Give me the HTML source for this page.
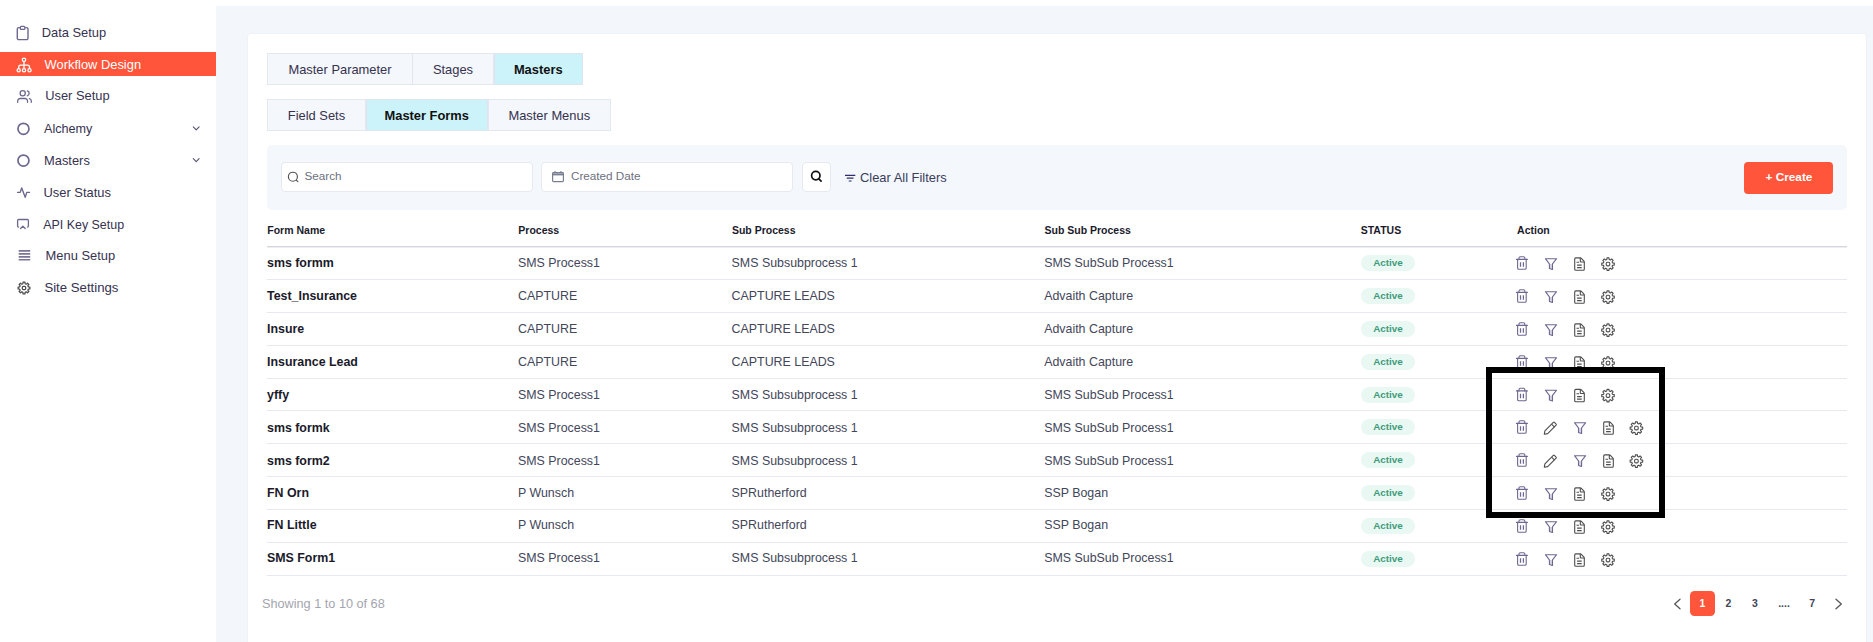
<!DOCTYPE html>
<html><head><meta charset="utf-8"><style>
html,body{margin:0;padding:0;width:1873px;height:642px;overflow:hidden;background:#fff;font-family:"Liberation Sans", sans-serif;}
.t{position:absolute;white-space:nowrap;line-height:20px;}
.ic{position:absolute;overflow:visible}
#side{position:absolute;left:0;top:0;width:216px;height:642px;background:#fff}
#main{position:absolute;left:216px;top:6px;width:1657px;height:636px;background:#f3f6fa}
#card{position:absolute;left:248px;top:34px;width:1618px;height:640px;background:#fff;border-radius:3px;box-shadow:0 0 0 1px #eef1f7}

.tab{position:absolute;height:32px;box-sizing:border-box;border:1px solid #e3e8f0}
.inp{position:absolute;top:162px;height:30px;box-sizing:border-box;background:#fff;border:1px solid #e6e9f0;border-radius:4px}
.badge{position:absolute;left:1361px;width:54px;height:16px;line-height:16px;border-radius:8px;background:#e9f8f3;color:#3f9b7b;font-size:9.9px;font-weight:700;text-align:center}

</style></head><body>
<div id="main"></div>
<div id="card"></div>
<div id="side"><div style="position:absolute;left:0;top:52px;width:216px;height:24px;background:#ff553b"></div><svg class="ic" style="left:0;top:0" width="40" height="320"><g fill="none" stroke="#6e6890" stroke-width="1.4" stroke-linejoin="round"><path d="M19.9 27.6h-1.2a1.4 1.4 0 0 0-1.4 1.4v9.2a1.4 1.4 0 0 0 1.4 1.4h7.9a1.4 1.4 0 0 0 1.4-1.4v-9.2a1.4 1.4 0 0 0-1.4-1.4h-1.2"/><rect x="20.3" y="26.4" width="4.6" height="3" rx="1"/></g></svg><div class="t" style="left:41.7px;top:22.50px;font-size:12.9px;font-weight:400;color:#36324f;">Data Setup</div><svg class="ic" style="left:0;top:0" width="40" height="320"><g fill="none" stroke="#fff" stroke-width="1.3"><circle cx="24" cy="59.8" r="1.7"/><circle cx="18.7" cy="70.3" r="1.6"/><circle cx="24" cy="70.3" r="1.6"/><circle cx="29.5" cy="70.3" r="1.6"/><path d="M24 61.5v7.1M18.7 68.7v-1.6a2 2 0 0 1 2-2h6.8a2 2 0 0 1 2 2v1.6"/></g></svg><div class="t" style="left:44.6px;top:54.60px;font-size:12.9px;font-weight:400;color:#ffffff;">Workflow Design</div><svg class="ic" style="left:0;top:0" width="40" height="320"><g fill="none" stroke="#6e6890" stroke-width="1.3" stroke-linecap="round"><circle cx="22.7" cy="93.3" r="2.6"/><path d="M27.3 90.8a2.6 2.6 0 0 1 0 5M17.7 102.3v-1.4a2.4 2.4 0 0 1 2.4-2.4h5a2.4 2.4 0 0 1 2.4 2.4v1.4M29.4 98.6a2.4 2.4 0 0 1 1.9 2.3v1.4"/></g></svg><div class="t" style="left:45.2px;top:86.40px;font-size:12.9px;font-weight:400;color:#36324f;">User Setup</div><svg class="ic" style="left:0;top:0" width="40" height="320"><circle cx="23.45" cy="128.85" r="5.5" fill="none" stroke="#6e6890" stroke-width="1.7"/></svg><div class="t" style="left:44.0px;top:118.85px;font-size:12.6px;font-weight:400;color:#36324f;">Alchemy</div><svg class="ic" style="left:0;top:0" width="40" height="320"><circle cx="23.45" cy="160.6" r="5.5" fill="none" stroke="#6e6890" stroke-width="1.7"/></svg><div class="t" style="left:44.0px;top:150.60px;font-size:12.9px;font-weight:400;color:#36324f;">Masters</div><svg class="ic" style="left:0;top:0" width="40" height="320"><path d="M17.6 192.4h2.6l1.5-4.5 3.5 9.3 1.6-4.8h2.7" fill="none" stroke="#6e6890" stroke-width="1.4" stroke-linejoin="round" stroke-linecap="round"/></svg><div class="t" style="left:43.5px;top:182.90px;font-size:12.9px;font-weight:400;color:#36324f;">User Status</div><svg class="ic" style="left:0;top:0" width="40" height="320"><g fill="none" stroke="#6e6890" stroke-width="1.3" stroke-linecap="round" stroke-linejoin="round"><path d="M18.6 227.1a1 1 0 0 1-1-1v-5.6a1 1 0 0 1 1-1h8.8a1 1 0 0 1 1 1v5.6a1 1 0 0 1-1 1"/><path d="M20.6 228.5l2.3-2.4 2.3 2.4"/></g></svg><div class="t" style="left:43.2px;top:214.50px;font-size:12.45px;font-weight:400;color:#36324f;">API Key Setup</div><svg class="ic" style="left:0;top:0" width="40" height="320"><g stroke="#7a7596" stroke-width="1.6"><path d="M18.7 250.9h11.5M18.7 253.9h11.5M18.7 256.9h11.5M18.7 259.8h11.5"/></g></svg><div class="t" style="left:45.6px;top:245.70px;font-size:12.9px;font-weight:400;color:#36324f;">Menu Setup</div><svg class="ic" style="left:0;top:0" width="40" height="320"><g fill="none" stroke="#4d4d4d" stroke-width="1.25" stroke-linejoin="round"><path d="M22.86 283.73 L23.05 282.10 L24.95 282.10 L25.14 283.73 L26.22 284.17 L27.50 283.16 L28.84 284.50 L27.83 285.78 L28.27 286.86 L29.90 287.05 L29.90 288.95 L28.27 289.14 L27.83 290.22 L28.84 291.50 L27.50 292.84 L26.22 291.83 L25.14 292.27 L24.95 293.90 L23.05 293.90 L22.86 292.27 L21.78 291.83 L20.50 292.84 L19.16 291.50 L20.17 290.22 L19.73 289.14 L18.10 288.95 L18.10 287.05 L19.73 286.86 L20.17 285.78 L19.16 284.50 L20.50 283.16 L21.78 284.17Z"/><rect x="22.30" y="286.30" width="3.40" height="3.40" rx="1.19"/></g></svg><div class="t" style="left:44.4px;top:277.60px;font-size:13.2px;font-weight:400;color:#36324f;">Site Settings</div><svg class="ic" style="left:0;top:0" width="216" height="320"><path d="M193.3 126.9l2.9 2.9 2.9-2.9" fill="none" stroke="#55516f" stroke-width="1.1" stroke-linecap="round" stroke-linejoin="round"/></svg><svg class="ic" style="left:0;top:0" width="216" height="320"><path d="M193.3 158.70000000000002l2.9 2.9 2.9-2.9" fill="none" stroke="#55516f" stroke-width="1.1" stroke-linecap="round" stroke-linejoin="round"/></svg></div>
<div class="tab" style="left:267px;top:53px;width:146px;background:#f4f7fb;border-color:#e3e7ef"></div><div class="t" style="left:267px;width:146px;text-align:center;top:59.8px;font-size:12.9px;font-weight:400;color:#36324f">Master Parameter</div><div class="tab" style="left:412px;top:53px;width:82px;background:#f4f7fb;border-color:#e3e7ef"></div><div class="t" style="left:412px;width:82px;text-align:center;top:59.8px;font-size:12.9px;font-weight:400;color:#36324f">Stages</div><div class="tab" style="left:493.5px;top:53px;width:89.5px;background:#cdf3fa;border-color:#e0e4ee"></div><div class="t" style="left:493.5px;width:89.5px;text-align:center;top:59.8px;font-size:12.9px;font-weight:700;color:#111">Masters</div><div class="tab" style="left:267px;top:99px;width:99px;background:#f4f7fb;border-color:#e3e7ef"></div><div class="t" style="left:267px;width:99px;text-align:center;top:105.5px;font-size:12.9px;font-weight:400;color:#36324f">Field Sets</div><div class="tab" style="left:365.5px;top:99px;width:122.5px;background:#cdf3fa;border-color:#e0e4ee"></div><div class="t" style="left:365.5px;width:122.5px;text-align:center;top:105.5px;font-size:12.9px;font-weight:700;color:#111">Master Forms</div><div class="tab" style="left:487.5px;top:99px;width:123.5px;background:#f4f7fb;border-color:#e3e7ef"></div><div class="t" style="left:487.5px;width:123.5px;text-align:center;top:105.5px;font-size:12.9px;font-weight:400;color:#36324f">Master Menus</div><div style="position:absolute;left:267px;top:145px;width:1580px;height:65px;background:#f4f7fb;border-radius:5px"></div><div class="inp" style="left:281px;width:252px"></div><div class="inp" style="left:541px;width:252px"></div><div class="inp" style="left:802px;width:29px"></div><svg class="ic" style="left:0;top:0" width="1000" height="220"><g fill="none" stroke="#505050" stroke-width="1.15" stroke-linecap="round"><circle cx="292.9" cy="176.7" r="4.5"/><path d="M296.3 180.1l1.6 1.6"/></g></svg><div class="t" style="left:304.5px;top:166.20px;font-size:11.7px;font-weight:400;color:#6c7080;">Search</div><svg class="ic" style="left:0;top:0" width="1000" height="220"><g fill="none" stroke="#7a8094" stroke-width="1.2"><rect x="552.6" y="172.6" width="10.8" height="9" rx="0.8"/><path d="M552.6 174.4h10.8" stroke-width="2"/><path d="M555 171v1.6M561 171v1.6"/></g></svg><div class="t" style="left:571.0px;top:166.20px;font-size:11.7px;font-weight:400;color:#6c7080;">Created Date</div><svg class="ic" style="left:0;top:0" width="1000" height="220"><g fill="none" stroke="#111" stroke-width="1.7" stroke-linecap="round"><circle cx="815.8" cy="175.6" r="4.2"/><path d="M818.8 178.8l2.3 2.3"/></g></svg><svg class="ic" style="left:0;top:0" width="1000" height="220"><g stroke="#2c2f6a" stroke-width="1.2"><path d="M845 175.4h10.3M846.8 178.2h6.7M848.7 181h2.9"/></g></svg><div class="t" style="left:860px;top:168.00px;font-size:12.9px;font-weight:400;color:#3a3d5c;">Clear All Filters</div><div style="position:absolute;left:1744px;top:162px;width:89px;height:32px;background:#ff553b;border-radius:4px"></div><div class="t" style="left:1765.5px;top:167.20px;font-size:11.8px;font-weight:700;color:#fff;">+ Create</div><div class="t" style="left:267.3px;top:220.30px;font-size:10.5px;font-weight:700;color:#1a1a2a;">Form Name</div><div class="t" style="left:518.3px;top:220.30px;font-size:10.5px;font-weight:700;color:#1a1a2a;">Process</div><div class="t" style="left:731.9px;top:220.30px;font-size:10.5px;font-weight:700;color:#1a1a2a;">Sub Process</div><div class="t" style="left:1044.5px;top:220.30px;font-size:10.5px;font-weight:700;color:#1a1a2a;">Sub Sub Process</div><div class="t" style="left:1360.7px;top:220.30px;font-size:10.5px;font-weight:700;color:#1a1a2a;">STATUS</div><div class="t" style="left:1517.1px;top:220.30px;font-size:10.5px;font-weight:700;color:#1a1a2a;">Action</div><div style="position:absolute;left:267px;top:246px;width:1580px;height:1px;background:#d4d6dc"></div><div style="position:absolute;left:267px;top:247px;width:1580px;height:1px;background:#eceef2"></div><div class="t" style="left:267px;top:253px;font-size:12.4px;font-weight:700;color:#1a1a2a">sms formm</div><div class="t" style="left:518px;top:253px;font-size:12.4px;font-weight:400;color:#43465a">SMS Process1</div><div class="t" style="left:731.6px;top:253px;font-size:12.4px;font-weight:400;color:#43465a">SMS Subsubprocess 1</div><div class="t" style="left:1044.2px;top:253px;font-size:12.4px;font-weight:400;color:#43465a">SMS SubSub Process1</div><div class="badge" style="top:255.10px">Active</div><div style="position:absolute;left:267px;top:279px;width:1580px;height:1px;background:#e6e9f0"></div><div class="t" style="left:267px;top:286px;font-size:12.4px;font-weight:700;color:#1a1a2a">Test_Insurance</div><div class="t" style="left:518px;top:286px;font-size:12.4px;font-weight:400;color:#43465a">CAPTURE</div><div class="t" style="left:731.6px;top:286px;font-size:12.4px;font-weight:400;color:#43465a">CAPTURE LEADS</div><div class="t" style="left:1044.2px;top:286px;font-size:12.4px;font-weight:400;color:#43465a">Advaith Capture</div><div class="badge" style="top:288.10px">Active</div><div style="position:absolute;left:267px;top:312px;width:1580px;height:1px;background:#e6e9f0"></div><div class="t" style="left:267px;top:319px;font-size:12.4px;font-weight:700;color:#1a1a2a">Insure</div><div class="t" style="left:518px;top:319px;font-size:12.4px;font-weight:400;color:#43465a">CAPTURE</div><div class="t" style="left:731.6px;top:319px;font-size:12.4px;font-weight:400;color:#43465a">CAPTURE LEADS</div><div class="t" style="left:1044.2px;top:319px;font-size:12.4px;font-weight:400;color:#43465a">Advaith Capture</div><div class="badge" style="top:321.10px">Active</div><div style="position:absolute;left:267px;top:345px;width:1580px;height:1px;background:#e6e9f0"></div><div class="t" style="left:267px;top:352px;font-size:12.4px;font-weight:700;color:#1a1a2a">Insurance Lead</div><div class="t" style="left:518px;top:352px;font-size:12.4px;font-weight:400;color:#43465a">CAPTURE</div><div class="t" style="left:731.6px;top:352px;font-size:12.4px;font-weight:400;color:#43465a">CAPTURE LEADS</div><div class="t" style="left:1044.2px;top:352px;font-size:12.4px;font-weight:400;color:#43465a">Advaith Capture</div><div class="badge" style="top:354.10px">Active</div><div style="position:absolute;left:267px;top:378px;width:1580px;height:1px;background:#e6e9f0"></div><div class="t" style="left:267px;top:385px;font-size:12.4px;font-weight:700;color:#1a1a2a">yffy</div><div class="t" style="left:518px;top:385px;font-size:12.4px;font-weight:400;color:#43465a">SMS Process1</div><div class="t" style="left:731.6px;top:385px;font-size:12.4px;font-weight:400;color:#43465a">SMS Subsubprocess 1</div><div class="t" style="left:1044.2px;top:385px;font-size:12.4px;font-weight:400;color:#43465a">SMS SubSub Process1</div><div class="badge" style="top:386.60px">Active</div><div style="position:absolute;left:267px;top:410px;width:1580px;height:1px;background:#e6e9f0"></div><div class="t" style="left:267px;top:418px;font-size:12.4px;font-weight:700;color:#1a1a2a">sms formk</div><div class="t" style="left:518px;top:418px;font-size:12.4px;font-weight:400;color:#43465a">SMS Process1</div><div class="t" style="left:731.6px;top:418px;font-size:12.4px;font-weight:400;color:#43465a">SMS Subsubprocess 1</div><div class="t" style="left:1044.2px;top:418px;font-size:12.4px;font-weight:400;color:#43465a">SMS SubSub Process1</div><div class="badge" style="top:419.10px">Active</div><div style="position:absolute;left:267px;top:443px;width:1580px;height:1px;background:#e6e9f0"></div><div class="t" style="left:267px;top:451px;font-size:12.4px;font-weight:700;color:#1a1a2a">sms form2</div><div class="t" style="left:518px;top:451px;font-size:12.4px;font-weight:400;color:#43465a">SMS Process1</div><div class="t" style="left:731.6px;top:451px;font-size:12.4px;font-weight:400;color:#43465a">SMS Subsubprocess 1</div><div class="t" style="left:1044.2px;top:451px;font-size:12.4px;font-weight:400;color:#43465a">SMS SubSub Process1</div><div class="badge" style="top:452.10px">Active</div><div style="position:absolute;left:267px;top:476px;width:1580px;height:1px;background:#e6e9f0"></div><div class="t" style="left:267px;top:483px;font-size:12.4px;font-weight:700;color:#1a1a2a">FN Orn</div><div class="t" style="left:518px;top:483px;font-size:12.4px;font-weight:400;color:#43465a">P Wunsch</div><div class="t" style="left:731.6px;top:483px;font-size:12.4px;font-weight:400;color:#43465a">SPRutherford</div><div class="t" style="left:1044.2px;top:483px;font-size:12.4px;font-weight:400;color:#43465a">SSP Bogan</div><div class="badge" style="top:485.10px">Active</div><div style="position:absolute;left:267px;top:509px;width:1580px;height:1px;background:#e6e9f0"></div><div class="t" style="left:267px;top:515px;font-size:12.4px;font-weight:700;color:#1a1a2a">FN Little</div><div class="t" style="left:518px;top:515px;font-size:12.4px;font-weight:400;color:#43465a">P Wunsch</div><div class="t" style="left:731.6px;top:515px;font-size:12.4px;font-weight:400;color:#43465a">SPRutherford</div><div class="t" style="left:1044.2px;top:515px;font-size:12.4px;font-weight:400;color:#43465a">SSP Bogan</div><div class="badge" style="top:518.10px">Active</div><div style="position:absolute;left:267px;top:542px;width:1580px;height:1px;background:#e6e9f0"></div><div class="t" style="left:267px;top:548px;font-size:12.4px;font-weight:700;color:#1a1a2a">SMS Form1</div><div class="t" style="left:518px;top:548px;font-size:12.4px;font-weight:400;color:#43465a">SMS Process1</div><div class="t" style="left:731.6px;top:548px;font-size:12.4px;font-weight:400;color:#43465a">SMS Subsubprocess 1</div><div class="t" style="left:1044.2px;top:548px;font-size:12.4px;font-weight:400;color:#43465a">SMS SubSub Process1</div><div class="badge" style="top:551.10px">Active</div><div style="position:absolute;left:267px;top:575px;width:1580px;height:1px;background:#e6e9f0"></div><svg class="ic" style="left:0;top:0" width="1873" height="642"><g fill="none" stroke="#6e6890" stroke-width="1.1" stroke-linecap="round" stroke-linejoin="round"><path d="M1516.4 259.40000000000003h11"/><path d="M1519.0 259.40000000000003v-1.3a1.3 1.3 0 0 1 1.3-1.3h3.2a1.3 1.3 0 0 1 1.3 1.3v1.3"/><path d="M1517.6000000000001 259.40000000000003v8.6a1.3 1.3 0 0 0 1.3 1.3h6a1.3 1.3 0 0 0 1.3-1.3v-8.6"/><path d="M1520.5 262.2v4.6M1523.4 262.2v4.6" stroke-width="1.25" stroke-linecap="butt"/></g><g stroke="#6e6890" stroke-width="1.1" stroke-linejoin="round"><path d="M1549.5 263.90000000000003h3.1v5.6l-3.1-1z" fill="#d5d2e0" stroke="none"/><path fill="none" d="M1545.4 258.7h11.2l-4.1 5.1v5.6l-3.1-1v-4.6z"/></g><g fill="none" stroke="#4d4d4d" stroke-width="1.1" stroke-linejoin="round"><path d="M1580.3 257.90000000000003h-4.6a1 1 0 0 0-1 1v10.4a1 1 0 0 0 1 1h7.6a1 1 0 0 0 1-1v-7.4a1 1 0 0 0-0.3-0.7l-2.9-3a1 1 0 0 0-0.8-0.3z"/><path d="M1580.3 258.1v3.1a0.8 0.8 0 0 0 0.8 0.8h3"/><path d="M1576.5 262.3h2.6M1577.1000000000001 265.1h4.6M1577.1000000000001 267.6h4.6"/></g><g fill="none" stroke="#4d4d4d" stroke-width="1.1" stroke-linejoin="round"><path d="M1606.79 259.56 L1606.99 257.83 L1609.01 257.83 L1609.21 259.56 L1610.36 260.03 L1611.72 258.95 L1613.15 260.38 L1612.07 261.74 L1612.54 262.89 L1614.27 263.09 L1614.27 265.11 L1612.54 265.31 L1612.07 266.46 L1613.15 267.82 L1611.72 269.25 L1610.36 268.17 L1609.21 268.64 L1609.01 270.37 L1606.99 270.37 L1606.79 268.64 L1605.64 268.17 L1604.28 269.25 L1602.85 267.82 L1603.93 266.46 L1603.46 265.31 L1601.73 265.11 L1601.73 263.09 L1603.46 262.89 L1603.93 261.74 L1602.85 260.38 L1604.28 258.95 L1605.64 260.03Z"/><rect x="1606.20" y="262.30" width="3.60" height="3.60" rx="1.26"/></g><g fill="none" stroke="#6e6890" stroke-width="1.1" stroke-linecap="round" stroke-linejoin="round"><path d="M1516.4 292.40000000000003h11"/><path d="M1519.0 292.40000000000003v-1.3a1.3 1.3 0 0 1 1.3-1.3h3.2a1.3 1.3 0 0 1 1.3 1.3v1.3"/><path d="M1517.6000000000001 292.40000000000003v8.6a1.3 1.3 0 0 0 1.3 1.3h6a1.3 1.3 0 0 0 1.3-1.3v-8.6"/><path d="M1520.5 295.2v4.6M1523.4 295.2v4.6" stroke-width="1.25" stroke-linecap="butt"/></g><g stroke="#6e6890" stroke-width="1.1" stroke-linejoin="round"><path d="M1549.5 296.90000000000003h3.1v5.6l-3.1-1z" fill="#d5d2e0" stroke="none"/><path fill="none" d="M1545.4 291.7h11.2l-4.1 5.1v5.6l-3.1-1v-4.6z"/></g><g fill="none" stroke="#4d4d4d" stroke-width="1.1" stroke-linejoin="round"><path d="M1580.3 290.90000000000003h-4.6a1 1 0 0 0-1 1v10.4a1 1 0 0 0 1 1h7.6a1 1 0 0 0 1-1v-7.4a1 1 0 0 0-0.3-0.7l-2.9-3a1 1 0 0 0-0.8-0.3z"/><path d="M1580.3 291.1v3.1a0.8 0.8 0 0 0 0.8 0.8h3"/><path d="M1576.5 295.3h2.6M1577.1000000000001 298.1h4.6M1577.1000000000001 300.6h4.6"/></g><g fill="none" stroke="#4d4d4d" stroke-width="1.1" stroke-linejoin="round"><path d="M1606.79 292.56 L1606.99 290.83 L1609.01 290.83 L1609.21 292.56 L1610.36 293.03 L1611.72 291.95 L1613.15 293.38 L1612.07 294.74 L1612.54 295.89 L1614.27 296.09 L1614.27 298.11 L1612.54 298.31 L1612.07 299.46 L1613.15 300.82 L1611.72 302.25 L1610.36 301.17 L1609.21 301.64 L1609.01 303.37 L1606.99 303.37 L1606.79 301.64 L1605.64 301.17 L1604.28 302.25 L1602.85 300.82 L1603.93 299.46 L1603.46 298.31 L1601.73 298.11 L1601.73 296.09 L1603.46 295.89 L1603.93 294.74 L1602.85 293.38 L1604.28 291.95 L1605.64 293.03Z"/><rect x="1606.20" y="295.30" width="3.60" height="3.60" rx="1.26"/></g><g fill="none" stroke="#6e6890" stroke-width="1.1" stroke-linecap="round" stroke-linejoin="round"><path d="M1516.4 325.40000000000003h11"/><path d="M1519.0 325.40000000000003v-1.3a1.3 1.3 0 0 1 1.3-1.3h3.2a1.3 1.3 0 0 1 1.3 1.3v1.3"/><path d="M1517.6000000000001 325.40000000000003v8.6a1.3 1.3 0 0 0 1.3 1.3h6a1.3 1.3 0 0 0 1.3-1.3v-8.6"/><path d="M1520.5 328.2v4.6M1523.4 328.2v4.6" stroke-width="1.25" stroke-linecap="butt"/></g><g stroke="#6e6890" stroke-width="1.1" stroke-linejoin="round"><path d="M1549.5 329.90000000000003h3.1v5.6l-3.1-1z" fill="#d5d2e0" stroke="none"/><path fill="none" d="M1545.4 324.7h11.2l-4.1 5.1v5.6l-3.1-1v-4.6z"/></g><g fill="none" stroke="#4d4d4d" stroke-width="1.1" stroke-linejoin="round"><path d="M1580.3 323.90000000000003h-4.6a1 1 0 0 0-1 1v10.4a1 1 0 0 0 1 1h7.6a1 1 0 0 0 1-1v-7.4a1 1 0 0 0-0.3-0.7l-2.9-3a1 1 0 0 0-0.8-0.3z"/><path d="M1580.3 324.1v3.1a0.8 0.8 0 0 0 0.8 0.8h3"/><path d="M1576.5 328.3h2.6M1577.1000000000001 331.1h4.6M1577.1000000000001 333.6h4.6"/></g><g fill="none" stroke="#4d4d4d" stroke-width="1.1" stroke-linejoin="round"><path d="M1606.79 325.56 L1606.99 323.83 L1609.01 323.83 L1609.21 325.56 L1610.36 326.03 L1611.72 324.95 L1613.15 326.38 L1612.07 327.74 L1612.54 328.89 L1614.27 329.09 L1614.27 331.11 L1612.54 331.31 L1612.07 332.46 L1613.15 333.82 L1611.72 335.25 L1610.36 334.17 L1609.21 334.64 L1609.01 336.37 L1606.99 336.37 L1606.79 334.64 L1605.64 334.17 L1604.28 335.25 L1602.85 333.82 L1603.93 332.46 L1603.46 331.31 L1601.73 331.11 L1601.73 329.09 L1603.46 328.89 L1603.93 327.74 L1602.85 326.38 L1604.28 324.95 L1605.64 326.03Z"/><rect x="1606.20" y="328.30" width="3.60" height="3.60" rx="1.26"/></g><g fill="none" stroke="#6e6890" stroke-width="1.1" stroke-linecap="round" stroke-linejoin="round"><path d="M1516.4 358.40000000000003h11"/><path d="M1519.0 358.40000000000003v-1.3a1.3 1.3 0 0 1 1.3-1.3h3.2a1.3 1.3 0 0 1 1.3 1.3v1.3"/><path d="M1517.6000000000001 358.40000000000003v8.6a1.3 1.3 0 0 0 1.3 1.3h6a1.3 1.3 0 0 0 1.3-1.3v-8.6"/><path d="M1520.5 361.2v4.6M1523.4 361.2v4.6" stroke-width="1.25" stroke-linecap="butt"/></g><g stroke="#6e6890" stroke-width="1.1" stroke-linejoin="round"><path d="M1549.5 362.90000000000003h3.1v5.6l-3.1-1z" fill="#d5d2e0" stroke="none"/><path fill="none" d="M1545.4 357.7h11.2l-4.1 5.1v5.6l-3.1-1v-4.6z"/></g><g fill="none" stroke="#4d4d4d" stroke-width="1.1" stroke-linejoin="round"><path d="M1580.3 356.90000000000003h-4.6a1 1 0 0 0-1 1v10.4a1 1 0 0 0 1 1h7.6a1 1 0 0 0 1-1v-7.4a1 1 0 0 0-0.3-0.7l-2.9-3a1 1 0 0 0-0.8-0.3z"/><path d="M1580.3 357.1v3.1a0.8 0.8 0 0 0 0.8 0.8h3"/><path d="M1576.5 361.3h2.6M1577.1000000000001 364.1h4.6M1577.1000000000001 366.6h4.6"/></g><g fill="none" stroke="#4d4d4d" stroke-width="1.1" stroke-linejoin="round"><path d="M1606.79 358.56 L1606.99 356.83 L1609.01 356.83 L1609.21 358.56 L1610.36 359.03 L1611.72 357.95 L1613.15 359.38 L1612.07 360.74 L1612.54 361.89 L1614.27 362.09 L1614.27 364.11 L1612.54 364.31 L1612.07 365.46 L1613.15 366.82 L1611.72 368.25 L1610.36 367.17 L1609.21 367.64 L1609.01 369.37 L1606.99 369.37 L1606.79 367.64 L1605.64 367.17 L1604.28 368.25 L1602.85 366.82 L1603.93 365.46 L1603.46 364.31 L1601.73 364.11 L1601.73 362.09 L1603.46 361.89 L1603.93 360.74 L1602.85 359.38 L1604.28 357.95 L1605.64 359.03Z"/><rect x="1606.20" y="361.30" width="3.60" height="3.60" rx="1.26"/></g><g fill="none" stroke="#6e6890" stroke-width="1.1" stroke-linecap="round" stroke-linejoin="round"><path d="M1516.4 390.90000000000003h11"/><path d="M1519.0 390.90000000000003v-1.3a1.3 1.3 0 0 1 1.3-1.3h3.2a1.3 1.3 0 0 1 1.3 1.3v1.3"/><path d="M1517.6000000000001 390.90000000000003v8.6a1.3 1.3 0 0 0 1.3 1.3h6a1.3 1.3 0 0 0 1.3-1.3v-8.6"/><path d="M1520.5 393.7v4.6M1523.4 393.7v4.6" stroke-width="1.25" stroke-linecap="butt"/></g><g stroke="#6e6890" stroke-width="1.1" stroke-linejoin="round"><path d="M1549.5 395.40000000000003h3.1v5.6l-3.1-1z" fill="#d5d2e0" stroke="none"/><path fill="none" d="M1545.4 390.2h11.2l-4.1 5.1v5.6l-3.1-1v-4.6z"/></g><g fill="none" stroke="#4d4d4d" stroke-width="1.1" stroke-linejoin="round"><path d="M1580.3 389.40000000000003h-4.6a1 1 0 0 0-1 1v10.4a1 1 0 0 0 1 1h7.6a1 1 0 0 0 1-1v-7.4a1 1 0 0 0-0.3-0.7l-2.9-3a1 1 0 0 0-0.8-0.3z"/><path d="M1580.3 389.6v3.1a0.8 0.8 0 0 0 0.8 0.8h3"/><path d="M1576.5 393.8h2.6M1577.1000000000001 396.6h4.6M1577.1000000000001 399.1h4.6"/></g><g fill="none" stroke="#4d4d4d" stroke-width="1.1" stroke-linejoin="round"><path d="M1606.79 391.06 L1606.99 389.33 L1609.01 389.33 L1609.21 391.06 L1610.36 391.53 L1611.72 390.45 L1613.15 391.88 L1612.07 393.24 L1612.54 394.39 L1614.27 394.59 L1614.27 396.61 L1612.54 396.81 L1612.07 397.96 L1613.15 399.32 L1611.72 400.75 L1610.36 399.67 L1609.21 400.14 L1609.01 401.87 L1606.99 401.87 L1606.79 400.14 L1605.64 399.67 L1604.28 400.75 L1602.85 399.32 L1603.93 397.96 L1603.46 396.81 L1601.73 396.61 L1601.73 394.59 L1603.46 394.39 L1603.93 393.24 L1602.85 391.88 L1604.28 390.45 L1605.64 391.53Z"/><rect x="1606.20" y="393.80" width="3.60" height="3.60" rx="1.26"/></g><g fill="none" stroke="#6e6890" stroke-width="1.1" stroke-linecap="round" stroke-linejoin="round"><path d="M1516.4 423.40000000000003h11"/><path d="M1519.0 423.40000000000003v-1.3a1.3 1.3 0 0 1 1.3-1.3h3.2a1.3 1.3 0 0 1 1.3 1.3v1.3"/><path d="M1517.6000000000001 423.40000000000003v8.6a1.3 1.3 0 0 0 1.3 1.3h6a1.3 1.3 0 0 0 1.3-1.3v-8.6"/><path d="M1520.5 426.2v4.6M1523.4 426.2v4.6" stroke-width="1.25" stroke-linecap="butt"/></g><g fill="none" stroke="#4d4d4d" stroke-width="1.1" stroke-linejoin="round"><path d="M1544.3 434.2l0.6-3.4 8.4-8.4a0.8 0.8 0 0 1 1.1 0l1.7 1.7a0.8 0.8 0 0 1 0 1.1l-8.4 8.4z"/><path d="M1551.8 424.3l2.8 2.8"/></g><g stroke="#6e6890" stroke-width="1.1" stroke-linejoin="round"><path d="M1578.6 427.90000000000003h3.1v5.6l-3.1-1z" fill="#d5d2e0" stroke="none"/><path fill="none" d="M1574.5 422.7h11.2l-4.1 5.1v5.6l-3.1-1v-4.6z"/></g><g fill="none" stroke="#4d4d4d" stroke-width="1.1" stroke-linejoin="round"><path d="M1609.3 421.90000000000003h-4.6a1 1 0 0 0-1 1v10.4a1 1 0 0 0 1 1h7.6a1 1 0 0 0 1-1v-7.4a1 1 0 0 0-0.3-0.7l-2.9-3a1 1 0 0 0-0.8-0.3z"/><path d="M1609.3 422.1v3.1a0.8 0.8 0 0 0 0.8 0.8h3"/><path d="M1605.5 426.3h2.6M1606.1000000000001 429.1h4.6M1606.1000000000001 431.6h4.6"/></g><g fill="none" stroke="#4d4d4d" stroke-width="1.1" stroke-linejoin="round"><path d="M1635.19 423.56 L1635.39 421.83 L1637.41 421.83 L1637.61 423.56 L1638.76 424.03 L1640.12 422.95 L1641.55 424.38 L1640.47 425.74 L1640.94 426.89 L1642.67 427.09 L1642.67 429.11 L1640.94 429.31 L1640.47 430.46 L1641.55 431.82 L1640.12 433.25 L1638.76 432.17 L1637.61 432.64 L1637.41 434.37 L1635.39 434.37 L1635.19 432.64 L1634.04 432.17 L1632.68 433.25 L1631.25 431.82 L1632.33 430.46 L1631.86 429.31 L1630.13 429.11 L1630.13 427.09 L1631.86 426.89 L1632.33 425.74 L1631.25 424.38 L1632.68 422.95 L1634.04 424.03Z"/><rect x="1634.60" y="426.30" width="3.60" height="3.60" rx="1.26"/></g><g fill="none" stroke="#6e6890" stroke-width="1.1" stroke-linecap="round" stroke-linejoin="round"><path d="M1516.4 456.40000000000003h11"/><path d="M1519.0 456.40000000000003v-1.3a1.3 1.3 0 0 1 1.3-1.3h3.2a1.3 1.3 0 0 1 1.3 1.3v1.3"/><path d="M1517.6000000000001 456.40000000000003v8.6a1.3 1.3 0 0 0 1.3 1.3h6a1.3 1.3 0 0 0 1.3-1.3v-8.6"/><path d="M1520.5 459.2v4.6M1523.4 459.2v4.6" stroke-width="1.25" stroke-linecap="butt"/></g><g fill="none" stroke="#4d4d4d" stroke-width="1.1" stroke-linejoin="round"><path d="M1544.3 467.2l0.6-3.4 8.4-8.4a0.8 0.8 0 0 1 1.1 0l1.7 1.7a0.8 0.8 0 0 1 0 1.1l-8.4 8.4z"/><path d="M1551.8 457.3l2.8 2.8"/></g><g stroke="#6e6890" stroke-width="1.1" stroke-linejoin="round"><path d="M1578.6 460.90000000000003h3.1v5.6l-3.1-1z" fill="#d5d2e0" stroke="none"/><path fill="none" d="M1574.5 455.7h11.2l-4.1 5.1v5.6l-3.1-1v-4.6z"/></g><g fill="none" stroke="#4d4d4d" stroke-width="1.1" stroke-linejoin="round"><path d="M1609.3 454.90000000000003h-4.6a1 1 0 0 0-1 1v10.4a1 1 0 0 0 1 1h7.6a1 1 0 0 0 1-1v-7.4a1 1 0 0 0-0.3-0.7l-2.9-3a1 1 0 0 0-0.8-0.3z"/><path d="M1609.3 455.1v3.1a0.8 0.8 0 0 0 0.8 0.8h3"/><path d="M1605.5 459.3h2.6M1606.1000000000001 462.1h4.6M1606.1000000000001 464.6h4.6"/></g><g fill="none" stroke="#4d4d4d" stroke-width="1.1" stroke-linejoin="round"><path d="M1635.19 456.56 L1635.39 454.83 L1637.41 454.83 L1637.61 456.56 L1638.76 457.03 L1640.12 455.95 L1641.55 457.38 L1640.47 458.74 L1640.94 459.89 L1642.67 460.09 L1642.67 462.11 L1640.94 462.31 L1640.47 463.46 L1641.55 464.82 L1640.12 466.25 L1638.76 465.17 L1637.61 465.64 L1637.41 467.37 L1635.39 467.37 L1635.19 465.64 L1634.04 465.17 L1632.68 466.25 L1631.25 464.82 L1632.33 463.46 L1631.86 462.31 L1630.13 462.11 L1630.13 460.09 L1631.86 459.89 L1632.33 458.74 L1631.25 457.38 L1632.68 455.95 L1634.04 457.03Z"/><rect x="1634.60" y="459.30" width="3.60" height="3.60" rx="1.26"/></g><g fill="none" stroke="#6e6890" stroke-width="1.1" stroke-linecap="round" stroke-linejoin="round"><path d="M1516.4 489.40000000000003h11"/><path d="M1519.0 489.40000000000003v-1.3a1.3 1.3 0 0 1 1.3-1.3h3.2a1.3 1.3 0 0 1 1.3 1.3v1.3"/><path d="M1517.6000000000001 489.40000000000003v8.6a1.3 1.3 0 0 0 1.3 1.3h6a1.3 1.3 0 0 0 1.3-1.3v-8.6"/><path d="M1520.5 492.2v4.6M1523.4 492.2v4.6" stroke-width="1.25" stroke-linecap="butt"/></g><g stroke="#6e6890" stroke-width="1.1" stroke-linejoin="round"><path d="M1549.5 493.90000000000003h3.1v5.6l-3.1-1z" fill="#d5d2e0" stroke="none"/><path fill="none" d="M1545.4 488.7h11.2l-4.1 5.1v5.6l-3.1-1v-4.6z"/></g><g fill="none" stroke="#4d4d4d" stroke-width="1.1" stroke-linejoin="round"><path d="M1580.3 487.90000000000003h-4.6a1 1 0 0 0-1 1v10.4a1 1 0 0 0 1 1h7.6a1 1 0 0 0 1-1v-7.4a1 1 0 0 0-0.3-0.7l-2.9-3a1 1 0 0 0-0.8-0.3z"/><path d="M1580.3 488.1v3.1a0.8 0.8 0 0 0 0.8 0.8h3"/><path d="M1576.5 492.3h2.6M1577.1000000000001 495.1h4.6M1577.1000000000001 497.6h4.6"/></g><g fill="none" stroke="#4d4d4d" stroke-width="1.1" stroke-linejoin="round"><path d="M1606.79 489.56 L1606.99 487.83 L1609.01 487.83 L1609.21 489.56 L1610.36 490.03 L1611.72 488.95 L1613.15 490.38 L1612.07 491.74 L1612.54 492.89 L1614.27 493.09 L1614.27 495.11 L1612.54 495.31 L1612.07 496.46 L1613.15 497.82 L1611.72 499.25 L1610.36 498.17 L1609.21 498.64 L1609.01 500.37 L1606.99 500.37 L1606.79 498.64 L1605.64 498.17 L1604.28 499.25 L1602.85 497.82 L1603.93 496.46 L1603.46 495.31 L1601.73 495.11 L1601.73 493.09 L1603.46 492.89 L1603.93 491.74 L1602.85 490.38 L1604.28 488.95 L1605.64 490.03Z"/><rect x="1606.20" y="492.30" width="3.60" height="3.60" rx="1.26"/></g><g fill="none" stroke="#6e6890" stroke-width="1.1" stroke-linecap="round" stroke-linejoin="round"><path d="M1516.4 522.4h11"/><path d="M1519.0 522.4v-1.3a1.3 1.3 0 0 1 1.3-1.3h3.2a1.3 1.3 0 0 1 1.3 1.3v1.3"/><path d="M1517.6000000000001 522.4v8.6a1.3 1.3 0 0 0 1.3 1.3h6a1.3 1.3 0 0 0 1.3-1.3v-8.6"/><path d="M1520.5 525.1999999999999v4.6M1523.4 525.1999999999999v4.6" stroke-width="1.25" stroke-linecap="butt"/></g><g stroke="#6e6890" stroke-width="1.1" stroke-linejoin="round"><path d="M1549.5 526.9h3.1v5.6l-3.1-1z" fill="#d5d2e0" stroke="none"/><path fill="none" d="M1545.4 521.6999999999999h11.2l-4.1 5.1v5.6l-3.1-1v-4.6z"/></g><g fill="none" stroke="#4d4d4d" stroke-width="1.1" stroke-linejoin="round"><path d="M1580.3 520.9h-4.6a1 1 0 0 0-1 1v10.4a1 1 0 0 0 1 1h7.6a1 1 0 0 0 1-1v-7.4a1 1 0 0 0-0.3-0.7l-2.9-3a1 1 0 0 0-0.8-0.3z"/><path d="M1580.3 521.1v3.1a0.8 0.8 0 0 0 0.8 0.8h3"/><path d="M1576.5 525.3h2.6M1577.1000000000001 528.1h4.6M1577.1000000000001 530.6h4.6"/></g><g fill="none" stroke="#4d4d4d" stroke-width="1.1" stroke-linejoin="round"><path d="M1606.79 522.56 L1606.99 520.83 L1609.01 520.83 L1609.21 522.56 L1610.36 523.03 L1611.72 521.95 L1613.15 523.38 L1612.07 524.74 L1612.54 525.89 L1614.27 526.09 L1614.27 528.11 L1612.54 528.31 L1612.07 529.46 L1613.15 530.82 L1611.72 532.25 L1610.36 531.17 L1609.21 531.64 L1609.01 533.37 L1606.99 533.37 L1606.79 531.64 L1605.64 531.17 L1604.28 532.25 L1602.85 530.82 L1603.93 529.46 L1603.46 528.31 L1601.73 528.11 L1601.73 526.09 L1603.46 525.89 L1603.93 524.74 L1602.85 523.38 L1604.28 521.95 L1605.64 523.03Z"/><rect x="1606.20" y="525.30" width="3.60" height="3.60" rx="1.26"/></g><g fill="none" stroke="#6e6890" stroke-width="1.1" stroke-linecap="round" stroke-linejoin="round"><path d="M1516.4 555.4h11"/><path d="M1519.0 555.4v-1.3a1.3 1.3 0 0 1 1.3-1.3h3.2a1.3 1.3 0 0 1 1.3 1.3v1.3"/><path d="M1517.6000000000001 555.4v8.6a1.3 1.3 0 0 0 1.3 1.3h6a1.3 1.3 0 0 0 1.3-1.3v-8.6"/><path d="M1520.5 558.1999999999999v4.6M1523.4 558.1999999999999v4.6" stroke-width="1.25" stroke-linecap="butt"/></g><g stroke="#6e6890" stroke-width="1.1" stroke-linejoin="round"><path d="M1549.5 559.9h3.1v5.6l-3.1-1z" fill="#d5d2e0" stroke="none"/><path fill="none" d="M1545.4 554.6999999999999h11.2l-4.1 5.1v5.6l-3.1-1v-4.6z"/></g><g fill="none" stroke="#4d4d4d" stroke-width="1.1" stroke-linejoin="round"><path d="M1580.3 553.9h-4.6a1 1 0 0 0-1 1v10.4a1 1 0 0 0 1 1h7.6a1 1 0 0 0 1-1v-7.4a1 1 0 0 0-0.3-0.7l-2.9-3a1 1 0 0 0-0.8-0.3z"/><path d="M1580.3 554.1v3.1a0.8 0.8 0 0 0 0.8 0.8h3"/><path d="M1576.5 558.3h2.6M1577.1000000000001 561.1h4.6M1577.1000000000001 563.6h4.6"/></g><g fill="none" stroke="#4d4d4d" stroke-width="1.1" stroke-linejoin="round"><path d="M1606.79 555.56 L1606.99 553.83 L1609.01 553.83 L1609.21 555.56 L1610.36 556.03 L1611.72 554.95 L1613.15 556.38 L1612.07 557.74 L1612.54 558.89 L1614.27 559.09 L1614.27 561.11 L1612.54 561.31 L1612.07 562.46 L1613.15 563.82 L1611.72 565.25 L1610.36 564.17 L1609.21 564.64 L1609.01 566.37 L1606.99 566.37 L1606.79 564.64 L1605.64 564.17 L1604.28 565.25 L1602.85 563.82 L1603.93 562.46 L1603.46 561.31 L1601.73 561.11 L1601.73 559.09 L1603.46 558.89 L1603.93 557.74 L1602.85 556.38 L1604.28 554.95 L1605.64 556.03Z"/><rect x="1606.20" y="558.30" width="3.60" height="3.60" rx="1.26"/></g></svg><div class="t" style="left:262px;top:593.50px;font-size:12.7px;font-weight:400;color:#a3a5ad;">Showing 1 to 10 of 68</div><svg class="ic" style="left:0;top:0" width="1873" height="642"><g fill="none" stroke="#555" stroke-width="1.25" stroke-linecap="round" stroke-linejoin="round"><path d="M1680 599.2l-5.3 4.8 5.3 4.8M1836 599.2l5.3 4.8-5.3 4.8"/></g></svg><div style="position:absolute;left:1690px;top:591px;width:25px;height:25px;background:#ff553b;border-radius:4.5px"></div><div class="t" style="left:1687.3px;width:30px;text-align:center;top:593.9px;font-size:10.4px;font-weight:700;color:#fff">1</div><div class="t" style="left:1713.3px;width:30px;text-align:center;top:593.9px;font-size:10.4px;font-weight:700;color:#404356">2</div><div class="t" style="left:1739.9px;width:30px;text-align:center;top:593.9px;font-size:10.4px;font-weight:700;color:#404356">3</div><div class="t" style="left:1769px;width:30px;text-align:center;top:593.9px;font-size:10.4px;font-weight:700;color:#404356">....</div><div class="t" style="left:1797.2px;width:30px;text-align:center;top:593.9px;font-size:10.4px;font-weight:700;color:#404356">7</div><div style="position:absolute;left:1486px;top:367px;width:167px;height:139px;border:6px solid #000"></div>
</body></html>
